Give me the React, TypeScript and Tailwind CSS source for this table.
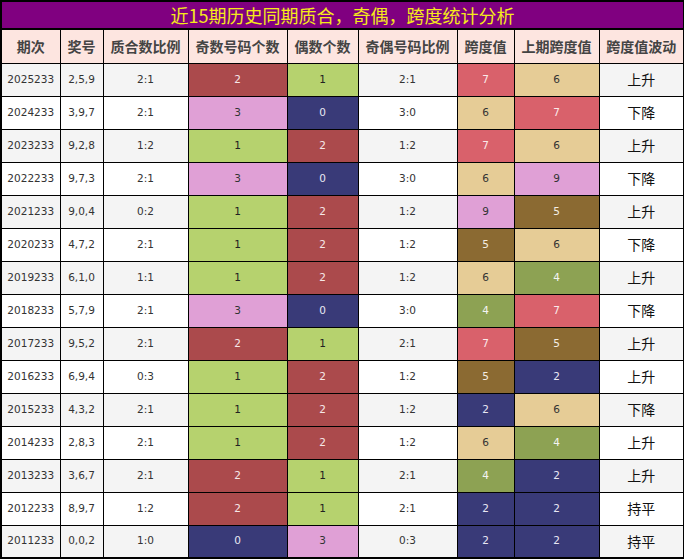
import React from "react";

type Row = [string, string, string, number, number, string, number, number, string];

const rows: Row[] = [
  ["2025233", "2,5,9", "2:1", 2, 1, "2:1", 7, 6, "上升"],
  ["2024233", "3,9,7", "2:1", 3, 0, "3:0", 6, 7, "下降"],
  ["2023233", "9,2,8", "1:2", 1, 2, "1:2", 7, 6, "上升"],
  ["2022233", "9,7,3", "2:1", 3, 0, "3:0", 6, 9, "下降"],
  ["2021233", "9,0,4", "0:2", 1, 2, "1:2", 9, 5, "上升"],
  ["2020233", "4,7,2", "2:1", 1, 2, "1:2", 5, 6, "下降"],
  ["2019233", "6,1,0", "1:1", 1, 2, "1:2", 6, 4, "上升"],
  ["2018233", "5,7,9", "2:1", 3, 0, "3:0", 4, 7, "下降"],
  ["2017233", "9,5,2", "2:1", 2, 1, "2:1", 7, 5, "上升"],
  ["2016233", "6,9,4", "0:3", 1, 2, "1:2", 5, 2, "上升"],
  ["2015233", "4,3,2", "2:1", 1, 2, "1:2", 2, 6, "下降"],
  ["2014233", "2,8,3", "2:1", 1, 2, "1:2", 6, 4, "上升"],
  ["2013233", "3,6,7", "2:1", 2, 1, "2:1", 4, 2, "上升"],
  ["2012233", "8,9,7", "1:2", 2, 1, "2:1", 2, 2, "持平"],
  ["2011233", "0,0,2", "1:0", 0, 3, "0:3", 2, 2, "持平"],
];

// odd / even count colours
const countColor: Record<number, string> = {
  0: "bg-[#393a78] text-[#e8e8f4]",
  1: "bg-[#b6d26e] text-[#222]",
  2: "bg-[#ab4a4c] text-[#f6e8e8]",
  3: "bg-[#e0a0d6] text-[#333]",
};

// span colours
const spanColor: Record<number, string> = {
  2: "bg-[#393a78] text-[#e8e8f4]",
  4: "bg-[#8da253] text-[#f4f4f4]",
  5: "bg-[#8b6a32] text-[#f4eee4]",
  6: "bg-[#e6cc96] text-[#333]",
  7: "bg-[#d9616b] text-[#fbeaea]",
  9: "bg-[#e0a0d6] text-[#333]",
};

const headers = ["期次", "奖号", "质合数比例", "奇数号码个数", "偶数个数", "奇偶号码比例", "跨度值", "上期跨度值", "跨度值波动"];
const widths = ["w-[59px]", "w-[43px]", "w-[85px]", "w-[99px]", "w-[71px]", "w-[99px]", "w-[57px]", "w-[85px]", "w-[85px]"];

const num = "font-['DejaVu_Sans',sans-serif] text-[10.5px]";

export default function App() {
  return (
    <div className="w-[684px] h-[559px] bg-white font-['Noto_Sans_CJK_SC',sans-serif]">
      <table className="w-[684px] table-fixed border-collapse border-2 border-black">
        <colgroup>
          {widths.map((w, i) => (
            <col key={i} className={w} />
          ))}
        </colgroup>
        <thead>
          <tr>
            <th colSpan={9} className="h-[28px] bg-[#800080] border-2 border-black text-[#f5ea1a] text-[18px] font-normal leading-none p-0">
              近15期历史同期质合，奇偶，跨度统计分析
            </th>
          </tr>
          <tr>
            {headers.map((h) => (
              <th key={h} className="h-[34px] bg-[#fde5e0] border border-black text-[#444] text-[14px] font-bold p-0 whitespace-nowrap">
                {h}
              </th>
            ))}
          </tr>
        </thead>
        <tbody>
          {rows.map((r, i) => {
            const bg = i % 2 === 0 ? "bg-[#f4f4f4]" : "bg-white";
            return (
              <tr key={r[0]} className="h-[33px]">
                <td className={`${bg} ${num} text-[#333] text-center border border-black p-0`}>{r[0]}</td>
                <td className={`${bg} ${num} text-[#333] text-center border border-black p-0`}>{r[1]}</td>
                <td className={`${bg} ${num} text-[#333] text-center border border-black p-0`}>{r[2]}</td>
                <td className={`${countColor[r[3]]} ${num} text-center border border-black p-0`}>{r[3]}</td>
                <td className={`${countColor[r[4]]} ${num} text-center border border-black p-0`}>{r[4]}</td>
                <td className={`${bg} ${num} text-[#333] text-center border border-black p-0`}>{r[5]}</td>
                <td className={`${spanColor[r[6]]} ${num} text-center border border-black p-0`}>{r[6]}</td>
                <td className={`${spanColor[r[7]]} ${num} text-center border border-black p-0`}>{r[7]}</td>
                <td className={`${bg} text-[14px] text-[#111] text-center border border-black p-0`}>{r[8]}</td>
              </tr>
            );
          })}
        </tbody>
      </table>
    </div>
  );
}
